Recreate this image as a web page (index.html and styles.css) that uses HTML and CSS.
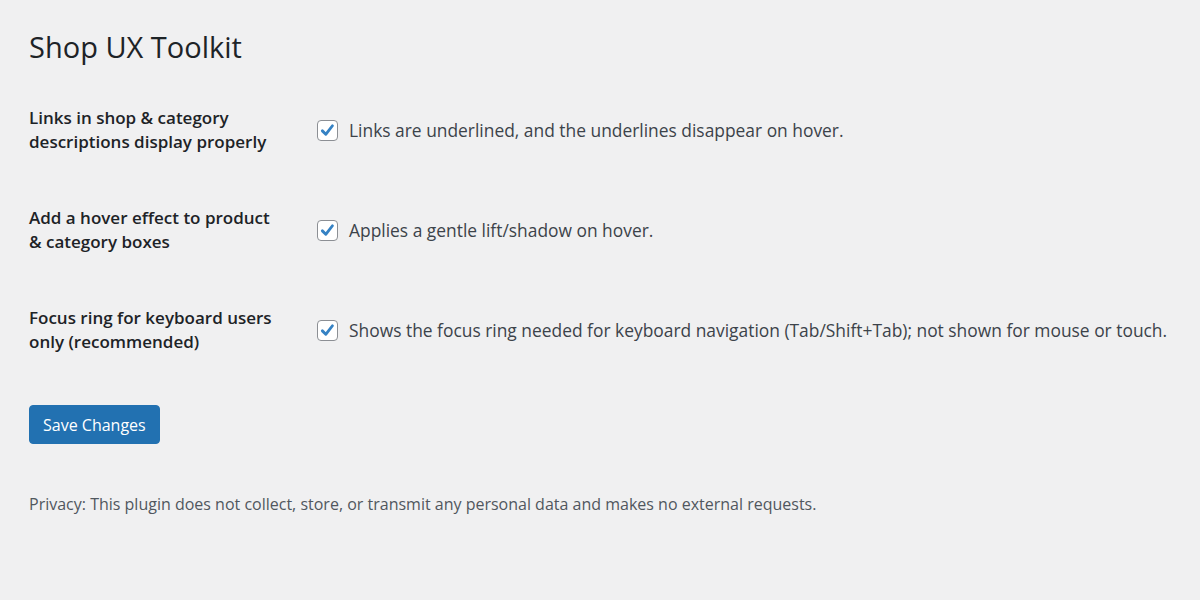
FILE: index.html
```html
<!DOCTYPE html>
<html lang="en">
<head>
  <meta charset="UTF-8">
  <title>Shop UX Toolkit</title>
  <link rel="stylesheet" href="styles.css">
</head>
<body>
  <div class="wrap">
    <h1>Shop UX Toolkit</h1>
    <form>
      <table class="form-table">
        <tr>
          <th>Links in shop &amp; category descriptions display properly</th>
          <td>
            <label class="check">
              <span class="box"><svg viewBox="0 0 20 20"><path d="M4.6 10.4 L8.2 14 L15.2 5"/></svg></span>
              Links are underlined, and the underlines disappear on hover.
            </label>
          </td>
        </tr>
        <tr>
          <th>Add a hover effect to product &amp; category boxes</th>
          <td>
            <label class="check">
              <span class="box"><svg viewBox="0 0 20 20"><path d="M4.6 10.4 L8.2 14 L15.2 5"/></svg></span>
              Applies a gentle lift/shadow on hover.
            </label>
          </td>
        </tr>
        <tr>
          <th>Focus ring for keyboard users only (recommended)</th>
          <td>
            <label class="check">
              <span class="box"><svg viewBox="0 0 20 20"><path d="M4.6 10.4 L8.2 14 L15.2 5"/></svg></span>
              Shows the focus ring needed for keyboard navigation (Tab/Shift+Tab); not shown for mouse or touch.
            </label>
          </td>
        </tr>
      </table>
      <button type="button" class="button-primary">Save Changes</button>
    </form>
    <p class="privacy">Privacy: This plugin does not collect, store, or transmit any personal data and makes no external requests.</p>
  </div>
</body>
</html>
```

FILE: styles.css
```css
* {
  box-sizing: border-box;
}

body {
  margin: 0;
  background: #f0f0f1;
  color: #1d2327;
  font-family: "Open Sans", "Noto Sans", sans-serif;
  font-size: 17px;
  line-height: 1.4;
}

.wrap {
  padding: 27px 20px 0 29px;
}

h1 {
  margin: 0 0 14px;
  font-size: 29px;
  font-weight: 400;
  line-height: 39px;
}

.form-table {
  border-collapse: collapse;
}

.form-table th {
  width: 263px;
  padding: 26px 13px 26px 0;
  text-align: left;
  vertical-align: top;
  font-weight: 600;
  line-height: 24px;
}

.form-table td {
  padding: 0 0 0 25px;
  vertical-align: middle;
  line-height: 24px;
}

.check {
  display: flex;
  align-items: center;
  gap: 11px;
  color: #3c434a;
  font-size: 17.4px;
  white-space: nowrap;
}

.box {
  width: 21px;
  height: 21px;
  flex-shrink: 0;
  background: #fff;
  border: 1px solid #8c8f94;
  border-radius: 4px;
  display: flex;
}

.box svg {
  width: 19px;
  height: 19px;
}

.box path {
  fill: none;
  stroke: #3582c4;
  stroke-width: 3;
  stroke-linecap: round;
  stroke-linejoin: round;
}

.button-primary {
  display: block;
  margin-top: 25px;
  height: 39px;
  padding: 0 13px;
  background: #2271b1;
  border: 1px solid #2271b1;
  border-radius: 4px;
  color: #fff;
  font-family: inherit;
  font-size: 16px;
  cursor: pointer;
}

.privacy {
  margin: 48px 0 0;
  color: #50575e;
  font-size: 16px;
  line-height: 24px;
}
```
